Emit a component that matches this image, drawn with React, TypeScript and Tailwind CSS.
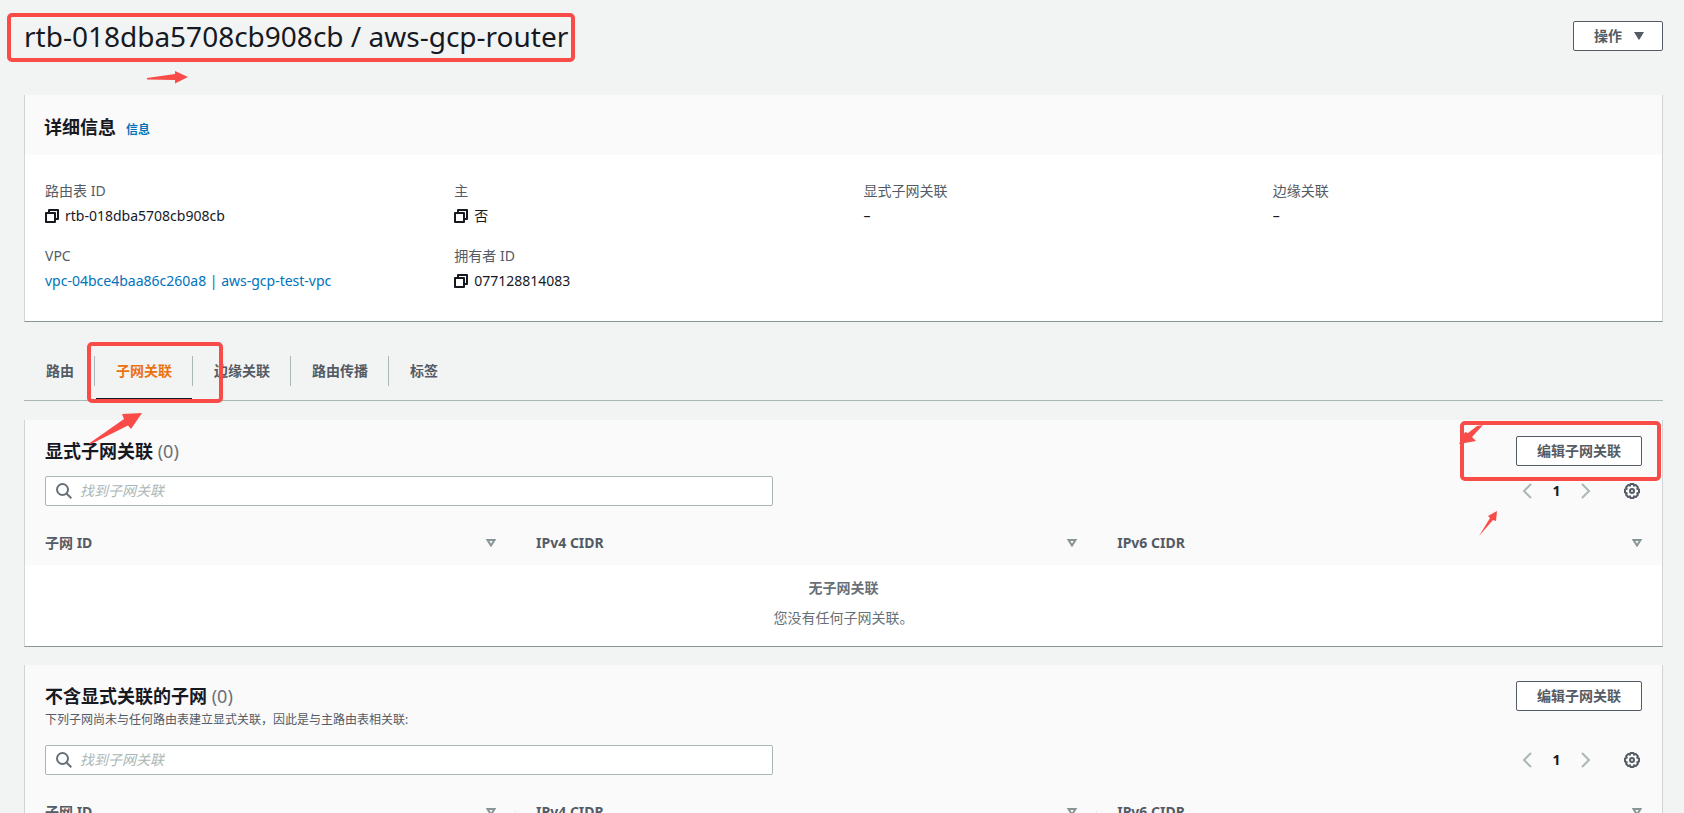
import React, { useState } from "react";

const TABS = ["路由", "子网关联", "边缘关联", "路由传播", "标签"];
const COLUMNS = ["子网 ID", "IPv4 CIDR", "IPv6 CIDR"];

function CopyIcon() {
  return (
    <svg width="14" height="14" viewBox="0 0 14 14" fill="none" stroke="currentColor" strokeWidth="2" strokeLinejoin="round">
      <path d="M1 4h9v9H1z" />
      <path d="M4 4V1h9v9h-3" />
    </svg>
  );
}

function SearchIcon() {
  return (
    <svg width="16" height="16" viewBox="0 0 16 16" fill="none" stroke="currentColor" strokeWidth="2">
      <circle cx="6.5" cy="6.5" r="5.5" />
      <path d="M10.5 10.5l4.8 4.8" />
    </svg>
  );
}

function ChevronIcon({ right }: { right?: boolean }) {
  return (
    <svg width="16" height="16" viewBox="0 0 16 16" fill="none" stroke="currentColor" strokeWidth="2">
      <path d={right ? "M4 1l7 7-7 7" : "M12 1L5 8l7 7"} />
    </svg>
  );
}

function GearIcon() {
  return (
    <svg width="16" height="16" viewBox="0 0 16 16" fill="none" stroke="currentColor" strokeWidth="2" strokeLinejoin="round">
      <path d="M6.5 1h3l.5 1.6 1.8-.6 2.1 2.1-.6 1.8 1.7.6v3l-1.7.6.6 1.8-2.1 2.1-1.8-.6-.5 1.6h-3L6 13.4l-1.8.6-2.1-2.1.6-1.8L1 9.500v-3l1.700-.6-.6-1.800L4.200 2l1.800.6z" />
      <circle cx="8" cy="8" r="2" />
    </svg>
  );
}

function Value({ label, children, copy }: { label: string; children: React.ReactNode; copy?: boolean }) {
  return (
    <div className="px-5">
      <dt className="text-[#545b64]">{label}</dt>
      <dd className="mt-[3px] flex items-center gap-[6px]">
        {copy && (
          <button type="button" aria-label={`复制 ${label}`}>
            <CopyIcon />
          </button>
        )}
        {children}
      </dd>
    </div>
  );
}

interface SubnetPanelProps {
  id: string;
  title: string;
  description?: string;
  divided?: boolean;
  empty?: { title: string; text: string };
}

function SubnetPanel({ id, title, description, divided, empty }: SubnetPanelProps) {
  return (
    <section className="mt-[18px] border-x border-b border-x-[#d0d5d5] border-b-[#879596] bg-white">
      <div className="bg-[#fafafa] px-5 pt-4 pb-4">
        <div className="flex items-start justify-between">
          <div>
            <h2 className="text-lg leading-[30px] font-bold">
              {title} <span className="font-normal text-[#687078]">(0)</span>
            </h2>
            {description && <p className="text-xs leading-[18px] text-[#545b64]">{description}</p>}
          </div>
          <button
            type="button"
            className="h-[30px] rounded-xs border border-[#545b64] bg-white px-5 font-bold text-[#545b64]"
          >
            编辑子网关联
          </button>
        </div>
        <div className={`flex items-center justify-between ${description ? "mt-4" : "mt-[10px]"}`}>
          <div className="flex h-[30px] w-[728px] items-center gap-2 rounded-xs border border-[#aab7b8] bg-white px-[10px] text-[#687078]">
            <SearchIcon />
            <input
              id={id}
              type="search"
              aria-label="找到子网关联"
              placeholder="找到子网关联"
              className="min-w-0 flex-1 text-[#16191f] outline-none placeholder:text-[#aab7b8] placeholder:italic"
            />
          </div>
          <div className="flex items-center text-[#aab7b8]">
            <button type="button" aria-label="上一页">
              <ChevronIcon />
            </button>
            <button type="button" className="w-[43px] font-bold text-[#16191f]">
              1
            </button>
            <button type="button" aria-label="下一页">
              <ChevronIcon right />
            </button>
            <button type="button" aria-label="首选项" className="mr-[2px] ml-[30px] text-[#545b64]">
              <GearIcon />
            </button>
          </div>
        </div>
      </div>
      <table className="w-full table-fixed">
        <colgroup>
          <col className="w-[30%]" />
          <col className="w-[35.5%]" />
          <col />
        </colgroup>
        <thead className="bg-[#fafafa]">
          <tr>
            {COLUMNS.map((col, i) => (
              <th key={col} className="p-0 pt-[5px] pb-[6px] text-left font-bold text-[#545b64]">
                <div className="flex h-8 items-center pl-5">
                  <span className="flex-1">{col}</span>
                  <button type="button" aria-label={`排序 ${col}`} className="mr-5 text-[#879596]">
                    <svg width="10" height="8" viewBox="0 0 10 8" fill="none" stroke="currentColor" strokeWidth="2">
                      <path d="M1.500 1h7L5 6.500z" />
                    </svg>
                  </button>
                  {divided && i < COLUMNS.length - 1 && (
                    <span className="-ml-px h-[18px] w-px self-end bg-[#eaeded]" />
                  )}
                </div>
              </th>
            ))}
          </tr>
        </thead>
        {empty && (
          <tbody>
            <tr>
              <td colSpan={3} className="pt-3 pb-[17px] text-center text-[#687078]">
                <p className="font-bold">{empty.title}</p>
                <p className="mt-2">{empty.text}</p>
              </td>
            </tr>
          </tbody>
        )}
      </table>
    </section>
  );
}

export default function App() {
  const [tab, setTab] = useState("子网关联");

  return (
    <div className="relative min-h-screen overflow-x-hidden bg-[#f2f3f3] pr-[21px] pb-6 pl-6 font-['Noto_Sans','Noto_Sans_CJK_SC',sans-serif] text-sm leading-[22px] text-[#16191f]">
      <header className="flex items-center justify-between pt-4">
        <h1 className="text-[28px] leading-10">rtb-018dba5708cb908cb / aws-gcp-router</h1>
        <button
          type="button"
          className="flex h-[30px] items-center gap-3 rounded-xs border border-[#545b64] bg-white pr-[18px] pl-5 font-bold text-[#545b64]"
        >
          操作
          <svg width="10" height="8" viewBox="0 0 10 8" fill="currentColor">
            <path d="M0 0h10L5.500 7.500h-1z" />
          </svg>
        </button>
      </header>

      <section className="mt-[39px] border-x border-b border-x-[#d0d5d5] border-b-[#879596] bg-white">
        <div className="flex h-[60px] items-baseline gap-[10px] bg-[#fafafa] px-[19px] pt-[18px]">
          <h2 className="text-lg leading-7 font-bold">详细信息</h2>
          <a href="#info" className="text-xs font-bold text-[#0073bb]">
            信息
          </a>
        </div>
        <dl className="grid grid-cols-4 gap-y-[18px] pt-[25px] pb-[29px]">
          <Value label="路由表 ID" copy>rtb-018dba5708cb908cb</Value>
          <Value label="主" copy>否</Value>
          <Value label="显式子网关联">–</Value>
          <Value label="边缘关联">–</Value>
          <Value label="VPC">
            <a href="#vpc" className="text-[#0073bb]">vpc-04bce4baa86c260a8 | aws-gcp-test-vpc</a>
          </Value>
          <Value label="拥有者 ID" copy>077128814083</Value>
        </dl>
      </section>

      {/* Tabs */}
      <nav className="mt-[19px] mb-[19px] flex h-[60px] items-stretch border-b border-[#aab7b8] pl-px">
        {TABS.map((t, i) => (
          <div key={t} className="flex items-center">
            {i > 0 && <span className="h-[30px] w-px bg-[#aab7b8]" />}
            <button
              type="button"
              onClick={() => setTab(t)}
              className={`ml-px h-full border-y-2 border-t-transparent px-5 font-bold ${
                t === tab ? "border-b-[#16191f] text-[#ec7211]" : "border-b-transparent text-[#545b64]"
              }`}
            >
              {t}
            </button>
          </div>
        ))}
      </nav>

      <SubnetPanel
        id="explicit-search"
        title="显式子网关联"
        empty={{ title: "无子网关联", text: "您没有任何子网关联。" }}
      />
      <SubnetPanel
        id="implicit-search"
        title="不含显式关联的子网"
        description="下列子网尚未与任何路由表建立显式关联，因此是与主路由表相关联:"
        divided
      />

      {/* Red markers drawn over the page */}
      <div className="pointer-events-none absolute top-[13px] left-[7px] h-[49px] w-[568px] rounded-[5px] border-4 border-[#f94c48]" />
      <div className="pointer-events-none absolute top-[342px] left-[87px] h-[61px] w-[136px] rounded-[5px] border-4 border-[#f94c48]" />
      <div className="pointer-events-none absolute top-[421px] right-[23px] h-[60px] w-[201px] rounded-[5px] border-4 border-[#f94c48]" />
      <svg className="pointer-events-none absolute top-[70px] left-[146px] text-[#f94c48]" width="42" height="14" viewBox="0 0 42 14" fill="currentColor">
        <path d="M1 8L29 4V1l13 6-13 6.500V10L1 9.500z" />
      </svg>
      <svg className="pointer-events-none absolute top-[412px] left-[88px] text-[#f94c48]" width="56" height="34" viewBox="0 0 56 34" fill="currentColor">
        <path d="M1 31.500L36 7l-2-5 20-1-11 16-3-3.500L3 32z" />
      </svg>
      <svg className="pointer-events-none absolute top-[424px] right-[200px] text-[#f94c48]" width="25" height="21" viewBox="0 0 25 21" fill="currentColor">
        <path d="M24 1L18 2 9 9 6 8 0 20l17-3-4-4z" />
      </svg>
      <svg className="pointer-events-none absolute top-[511px] right-[186px] text-[#f94c48]" width="20" height="26" viewBox="0 0 20 26" fill="currentColor">
        <path d="M1 25L12 7l-2-2 9-5-1 10-3-1z" />
      </svg>
    </div>
  );
}
